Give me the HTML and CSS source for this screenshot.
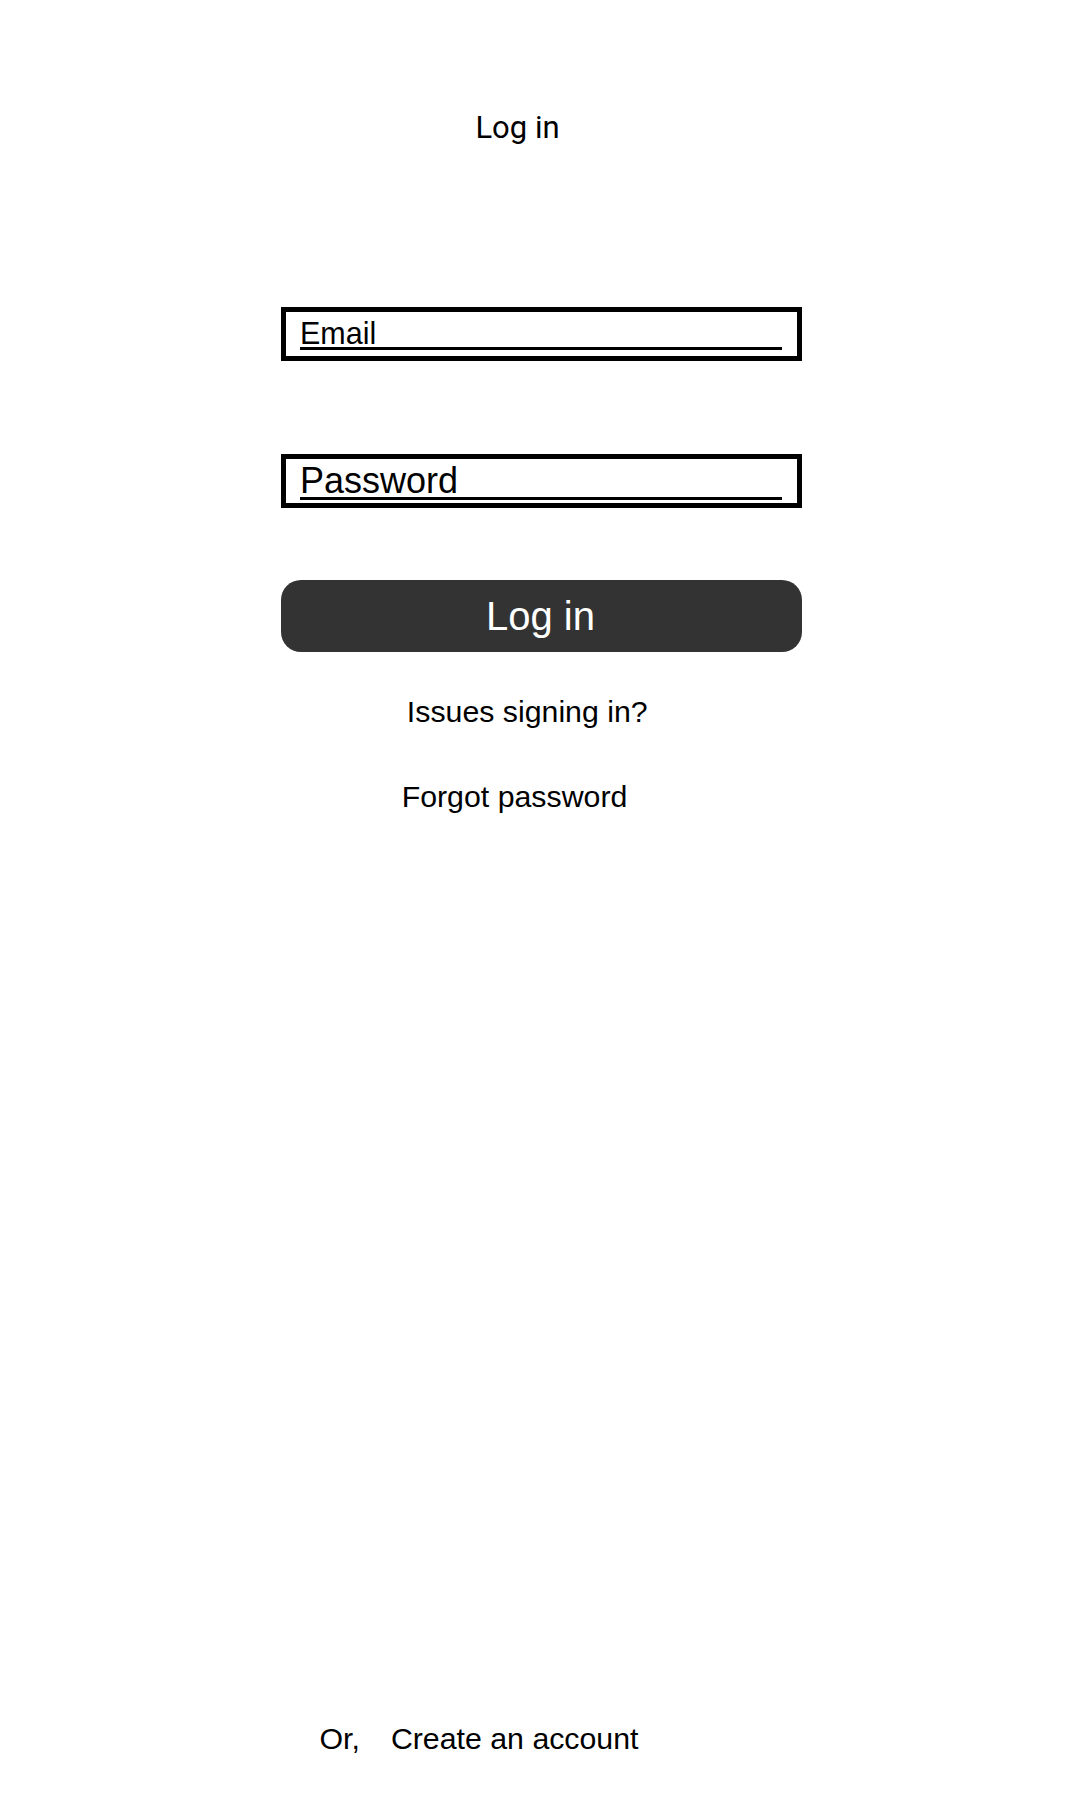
FILE: index.html
```html
<!DOCTYPE html>
<html lang="en">
<head>
<meta charset="utf-8">
<title>Log in</title>
<link rel="stylesheet" href="styles.css">
</head>
<body>
<main class="page">
  <h1 class="title">Log in</h1>
  <form class="form">
    <div class="field-box field-box--email">
      <div class="field field--email">Email</div>
    </div>
    <div class="field-box field-box--password">
      <div class="field field--password">Password</div>
    </div>
    <button type="button" class="login-btn">Log in</button>
  </form>
  <a class="link link--issues">Issues signing in?</a>
  <a class="link link--forgot">Forgot password</a>
  <div class="signup">
    <span class="signup-or">Or,</span>
    <a class="signup-link">Create an account</a>
  </div>
</main>
</body>
</html>
```

FILE: styles.css
```css
html, body {
  margin: 0;
  padding: 0;
  background: #ffffff;
}

.page {
  box-sizing: border-box;
  min-height: 1800px;
  width: 1080px;
  padding: 108px 0 44px 281px;
  display: flex;
  flex-direction: column;
  font-family: "Liberation Sans", Arial, sans-serif;
  color: #000;
}

.title {
  box-sizing: border-box;
  width: 521px;
  margin: 0;
  padding-right: 48px;
  font-family: Roboto, "Liberation Sans", sans-serif;
  font-weight: 400;
  font-size: 31px;
  line-height: 40px;
  text-align: center;
}

.form {
  width: 521px;
  margin: 159px 0 0;
  display: flex;
  flex-direction: column;
}

.field-box {
  box-sizing: border-box;
  height: 54px;
  border: 5px solid #000;
  display: flex;
  flex-direction: column;
}

.field-box--email {
  padding: 8px 15px 6px 14px;
}

.field-box--password {
  margin-top: 93px;
  padding: 6px 15px 3px 14px;
}

.field {
  border-bottom: 3px solid #000;
  white-space: nowrap;
}

.field--email {
  font-size: 30.5px;
  line-height: 27px;
}

.field--password {
  font-size: 36px;
  line-height: 32px;
}

.login-btn {
  margin-top: 72px;
  height: 72px;
  width: 521px;
  border: none;
  border-radius: 20px;
  background: #333333;
  color: #ffffff;
  font-family: "Liberation Sans", Arial, sans-serif;
  font-size: 40px;
  line-height: 72px;
  padding: 0 2px 0 0;
  text-align: center;
}

.link {
  box-sizing: border-box;
  width: 521px;
  display: block;
  font-size: 30.3px;
  line-height: 34px;
  text-align: center;
  color: #000;
  text-decoration: none;
}

.link--issues {
  margin-top: 43px;
  padding-right: 28.5px;
}

.link--forgot {
  margin-top: 50.5px;
  padding-right: 54px;
}

.signup {
  margin-top: auto;
  padding-left: 38.5px;
  display: flex;
  gap: 31px;
  font-size: 30.3px;
  line-height: 34px;
}

.signup-link {
  color: #000;
  text-decoration: none;
}
```
